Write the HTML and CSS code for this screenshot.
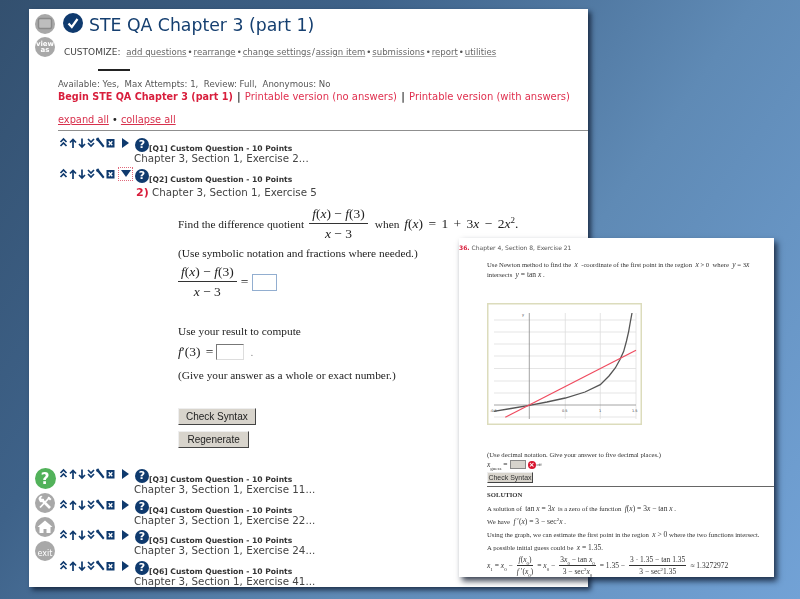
FILE: index.html
```html
<!DOCTYPE html>
<html lang="en">
<head>
<meta charset="utf-8">
<title>STE QA Chapter 3 (part 1)</title>
<link rel="stylesheet" href="styles.css">
</head>
<body>
<svg class="defs" width="0" height="0" aria-hidden="true">
  <symbol id="tools" viewBox="0 0 56 12">
    <g fill="none" stroke="#0f3a6e" stroke-width="1.7">
      <path d="M1.5 5 L4.5 2 L7.5 5 M1.5 9 L4.5 6 L7.5 9"/>
      <path d="M14 11 V2.5 M11 5.5 L14 2.5 L17 5.5"/>
      <path d="M23 1.5 V10 M20 7 L23 10 L26 7"/>
      <path d="M29 2 L32 5 L35 2 M29 6 L32 9 L35 6"/>
    </g>
    <path d="M37.5 1 L39.5 .5 L40.5 2.5 L45.5 9 L44 10.5 L39 4.5 L37 3 Z" fill="#0f3a6e"/>
    <rect x="47.5" y="2" width="8" height="8.5" fill="#0f3a6e"/>
    <path d="M49.7 4.2 L53.3 8.3 M53.3 4.2 L49.7 8.3" stroke="#fff" stroke-width="1.3"/>
  </symbol>
</svg>

<main class="window main-window">
  <nav class="rail">
    <div class="rail-group">
      <span class="round grey"><svg class="glyph" viewBox="0 0 20 20"><rect x="3.5" y="4.5" width="13" height="10" rx="1.5" fill="#bdbdbd" stroke="#8a8a8a" stroke-width="1.4"/></svg></span>
      <span class="round grey view-as">view<br>as</span>
    </div>
    <div class="rail-group rail-bottom">
      <span class="round green">?</span>
      <span class="round grey"><svg class="glyph" viewBox="0 0 20 20"><path d="M6.5 6.5 L15 15" stroke="#fff" stroke-width="2.6"/><path d="M14.5 4.5 L5 14.5" stroke="#fff" stroke-width="1.8"/><path d="M3.5 6 A3 3 0 0 1 7.5 3 L6 5 L7.5 6.8 L9 5.5 A3 3 0 0 1 5 9 Z" fill="#fff"/><path d="M13.5 3.5 L16.5 6 L15 7.5 L12.5 5 Z" fill="#fff"/></svg></span>
      <span class="round grey"><svg class="glyph" viewBox="0 0 20 20"><path d="M2.5 10 L10 3.5 L17.5 10 H15.5 V16 H11.5 V12 H8.5 V16 H4.5 V10 Z" fill="#fff"/></svg></span>
      <span class="round grey exit">exit</span>
    </div>
  </nav>

  <div class="content">
    <header class="title-row">
      <span class="check"><svg viewBox="0 0 20 20"><path d="M5.5 10.5 L8.8 14 L14.5 6" fill="none" stroke="#fff" stroke-width="2.2"/></svg></span>
      <h1 class="title">STE QA Chapter 3 (part 1)</h1>
    </header>
    <p class="customize">CUSTOMIZE: <span class="cust-links"><a>add questions</a><i>•</i><a>rearrange</a><i>•</i><a>change settings</a><i>/</i><a>assign item</a><i>•</i><a>submissions</a><i>•</i><a>report</a><i>•</i><a>utilities</a></span></p>
    <div class="tab-bar"></div>
    <p class="avail">Available: Yes,&nbsp; Max Attempts: 1,&nbsp; Review: Full,&nbsp; Anonymous: No</p>
    <p class="links"><b>Begin STE QA Chapter 3 (part 1)</b> <span class="sep">|</span> Printable version (no answers) <span class="sep">|</span> Printable version (with answers)</p>
    <p class="expand"><a>expand all</a> <span class="dot">•</span> <a>collapse all</a></p>
    <hr class="rule">

    <section class="q">
      <div class="q-head">
        <svg class="tools"><use href="#tools"/></svg>
        <span class="tri-cell"><span class="tri-right"></span></span>
        <span class="help">?</span>
        <span class="q-label">[Q1] Custom Question - 10 Points</span>
      </div>
      <p class="q-sub">Chapter 3, Section 1, Exercise 2...</p>
    </section>

    <section class="q q-open">
      <div class="q-head">
        <svg class="tools"><use href="#tools"/></svg>
        <span class="tri-cell tri-active"><span class="tri-down"></span></span>
        <span class="help">?</span>
        <span class="q-label">[Q2] Custom Question - 10 Points</span>
      </div>
      <p class="q-title"><b>2)</b> Chapter 3, Section 1, Exercise 5</p>
      <div class="problem">
        <div class="p-line p1"><span>Find the difference quotient</span>
          <span class="frac"><span class="num"><em>f</em>(<em>x</em>) − <em>f</em>(3)</span><span class="den"><em>x</em> − 3</span></span>
          <span class="when">when</span> <span class="math"><em>f</em>(<em>x</em>) = 1 + 3<em>x</em> − 2<em>x</em><sup>2</sup>.</span>
        </div>
        <div class="p-line p2">(Use symbolic notation and fractions where needed.)</div>
        <div class="p-line p3">
          <span class="frac"><span class="num"><em>f</em>(<em>x</em>) − <em>f</em>(3)</span><span class="den"><em>x</em> − 3</span></span>
          <span class="math">=</span> <span class="answer blue"></span>
        </div>
        <div class="p-line p4">Use your result to compute</div>
        <div class="p-line p5"><span class="math"><em>f</em>′(3) =</span> <span class="answer plain"></span> <span class="period">.</span></div>
        <div class="p-line p6">(Give your answer as a whole or exact number.)</div>
        <div class="btn btn-first">Check Syntax</div>
        <div class="btn btn-second">Regenerate</div>
      </div>
    </section>

    <section class="q">
      <div class="q-head">
        <svg class="tools"><use href="#tools"/></svg>
        <span class="tri-cell"><span class="tri-right"></span></span>
        <span class="help">?</span>
        <span class="q-label">[Q3] Custom Question - 10 Points</span>
      </div>
      <p class="q-sub">Chapter 3, Section 1, Exercise 11...</p>
    </section>
    <section class="q">
      <div class="q-head">
        <svg class="tools"><use href="#tools"/></svg>
        <span class="tri-cell"><span class="tri-right"></span></span>
        <span class="help">?</span>
        <span class="q-label">[Q4] Custom Question - 10 Points</span>
      </div>
      <p class="q-sub">Chapter 3, Section 1, Exercise 22...</p>
    </section>
    <section class="q">
      <div class="q-head">
        <svg class="tools"><use href="#tools"/></svg>
        <span class="tri-cell"><span class="tri-right"></span></span>
        <span class="help">?</span>
        <span class="q-label">[Q5] Custom Question - 10 Points</span>
      </div>
      <p class="q-sub">Chapter 3, Section 1, Exercise 24...</p>
    </section>
    <section class="q">
      <div class="q-head">
        <svg class="tools"><use href="#tools"/></svg>
        <span class="tri-cell"><span class="tri-right"></span></span>
        <span class="help">?</span>
        <span class="q-label">[Q6] Custom Question - 10 Points</span>
      </div>
      <p class="q-sub">Chapter 3, Section 1, Exercise 41...</p>
    </section>
  </div>
</main>

<aside class="window side-window">
  <p class="ex-title"><b>36.</b> Chapter 4, Section 8, Exercise 21</p>
  <div class="ex-body">
    <p class="ex-line ex-intro">Use Newton method to find the &nbsp;<em>x</em>&nbsp; -coordinate of the first point in the region &nbsp;<em>x</em> &gt; 0&nbsp; where &nbsp;<em>y</em> = 3<em>x</em></p>
    <p class="ex-line">intersects &nbsp;<span class="m"><em>y</em> = tan <em>x</em></span> .</p>
    <svg class="graph" viewBox="0 0 155 122" width="155" height="122">
      <rect x=".75" y=".75" width="153.5" height="120.5" fill="#fff" stroke="#dcdcbc" stroke-width="1.5"/>
      <g stroke="#dedede" stroke-width=".8">
        <path d="M7 17 H149 M7 29 H149 M7 41 H149 M7 53 H149 M7 65.5 H149 M7 78 H149 M7 90 H149 M7 114 H149"/>
        <path d="M78.3 10 V116 M113.3 10 V116 M149 10 V116"/>
      </g>
      <path d="M7 102 H149 M42.3 10 V116" stroke="#8d8d8d" stroke-width=".8"/>
      <path d="M6.7 108.3 L24 105.5 L42.3 102.3 L60 99 L78.3 95 L98 89 L113.3 81.7 L122 73 L128.3 65 L133 56.5 L136.7 48.3 L139.5 38 L141.7 28.3 L143.5 18 L145 10" fill="none" stroke="#555" stroke-width="1.3"/>
      <path d="M18.3 114.3 L149 47.3" stroke="#ef4b5f" stroke-width="1.2"/>
      <g class="graph-text">
        <text x="35" y="13">y</text><text x="3" y="109">-0.5</text><text x="75" y="109">0.5</text><text x="112" y="109">1</text><text x="145" y="109">1.5</text>
      </g>
    </svg>
    <p class="ex-line ex-decimal">(Use decimal notation. Give your answer to five decimal places.)</p>
    <div class="ex-line ex-guess"><span class="m"><em>x</em><sub>guess</sub> =</span><span class="mini-input"></span><span class="bad">×</span><span class="off">off</span></div>
    <div class="mini-btn">Check Syntax</div>
    <hr class="ex-rule">
    <p class="ex-line ex-sol"><b>SOLUTION</b></p>
    <p class="ex-line ex-s ex-first">A solution of &nbsp;<span class="m">tan <em>x</em> = 3<em>x</em></span> &nbsp;is a zero of the function &nbsp;<span class="m"><em>f</em>(<em>x</em>) = 3<em>x</em> − tan <em>x</em></span> .</p>
    <p class="ex-line ex-s">We have &nbsp;<span class="m"><em>f</em> ′(<em>x</em>) = 3 − sec<sup>2</sup><em>x</em></span> .</p>
    <p class="ex-line ex-s">Using the graph, we can estimate the first point in the region &nbsp;<span class="m"><em>x</em> &gt; 0</span> where the two functions intersect.</p>
    <p class="ex-line ex-s">A possible initial guess could be &nbsp;<span class="m"><em>x</em> = 1.35</span>.</p>
    <div class="ex-line ex-eq"><span class="m"><em>x</em><sub>1</sub> = <em>x</em><sub>0</sub> −</span>
      <span class="frac"><span class="num"><em>f</em>(<em>x</em><sub>0</sub>)</span><span class="den"><em>f</em> ′(<em>x</em><sub>0</sub>)</span></span>
      <span class="m">= <em>x</em><sub>0</sub> −</span>
      <span class="frac"><span class="num">3<em>x</em><sub>0</sub> − tan <em>x</em><sub>0</sub></span><span class="den">3 − sec<sup>2</sup><em>x</em><sub>0</sub></span></span>
      <span class="m">= 1.35 −</span>
      <span class="frac"><span class="num">3 · 1.35 − tan 1.35</span><span class="den">3 − sec<sup>2</sup>1.35</span></span>
      <span class="m">≈ 1.3272972</span>
    </div>
  </div>
</aside>
</body>
</html>
```

FILE: styles.css
```css
* { box-sizing: border-box; }
html, body { height: 100%; }
body {
  margin: 0;
  position: relative;
  overflow: hidden;
  font-family: "DejaVu Sans", sans-serif;
  background: linear-gradient(125deg, #33506f 0%, #3e6289 30%, #5f8ab5 62%, #72a2d6 100%);
}
p, h1 { margin: 0; }
.defs { position: absolute; }
em { font-style: italic; }
a { text-decoration: underline; }

.window {
  position: absolute;
  background: #fff;
  box-shadow: 3px 3px 5px rgba(10, 20, 40, .75);
}
.main-window {
  left: 29px; top: 9px;
  width: 559px; height: 578px;
  display: flex;
}
.side-window {
  left: 459px; top: 238px;
  width: 315px; height: 339px;
  box-shadow: 3px 4px 6px rgba(10, 20, 40, .8);
}

.rail {
  width: 29px;
  flex: none;
  display: flex;
  flex-direction: column;
  justify-content: space-between;
  padding: 5px 0 26px 6px;
  filter: blur(.3px);
}
.rail-group { display: flex; flex-direction: column; gap: 3px; }
.rail-bottom { gap: 4px; }
.round {
  width: 20px; height: 20px;
  border-radius: 50%;
  display: flex;
  align-items: center;
  justify-content: center;
  color: #fff;
  font-weight: bold;
  text-align: center;
}
.grey { background: #a8a8a8; }
.green { background: #52b25a; font-size: 15px; width: 21px; height: 21px; margin-left: -.5px; }
.glyph { width: 20px; height: 20px; }
.view-as { font-size: 7px; line-height: 6.5px; }
.exit { font-size: 8px; padding-top: 5px; font-weight: normal; }

.content { flex: 1; min-width: 0; filter: blur(.3px); }
.title-row { display: flex; align-items: center; gap: 6px; height: 20px; margin: 4px 0 0 5px; }
.check { width: 20px; height: 20px; border-radius: 50%; background: #0f3a6e; flex: none; display: block; }
.check svg { display: block; }
.title { font-size: 17.3px; font-weight: normal; color: #153f70; line-height: 20px; white-space: nowrap; margin-top: 4px; }
.customize { margin: 13px 0 0 6px; font-size: 9px; line-height: 12px; color: #444; white-space: nowrap; }
.cust-links { margin-left: 3px; color: #666; font-size: 8.55px; }
.cust-links a { text-decoration-color: #aaa; text-decoration-thickness: 1px; }
.cust-links i { font-style: normal; color: #555; margin: 0 1px; }
.tab-bar { width: 32px; height: 2px; margin: 11px 0 0 40px; background: #222; }
.avail { margin-top: 8px; font-size: 8.6px; line-height: 10px; color: #555; white-space: nowrap; }
.links { margin-top: 1px; font-size: 10px; line-height: 14px; color: #e0304f; white-space: nowrap; }
.links b { color: #d81e3c; font-size: 9.65px; }
.sep { color: #333; font-weight: bold; margin: 0 1px; }
.expand { margin-top: 9px; font-size: 9.8px; line-height: 14px; color: #d8304c; }
.dot { color: #222; }
.rule { margin: 3px 0 0; border: 0; height: 1px; background: #8f8f8f; }

.q { height: 30.5px; padding-top: 6px; margin-left: 1px; }
.q-open { height: auto; padding-top: 6px; }
.q-head { display: flex; align-items: flex-end; height: 15px; position: relative; }
.tools { width: 56px; height: 12px; flex: none; align-self: flex-start; }
.tri-cell { width: 13px; height: 12px; margin-left: 4px; flex: none; align-self: flex-start; display: flex; align-items: center; justify-content: center; }
.tri-active { outline: 1px dotted #e06a7c; }
.tri-right { border-left: 7px solid #0f3a6e; border-top: 5px solid transparent; border-bottom: 5px solid transparent; }
.tri-down { border-top: 7px solid #0f3a6e; border-left: 5px solid transparent; border-right: 5px solid transparent; }
.help {
  width: 14px; height: 14px;
  margin-left: 3px;
  border-radius: 50%;
  background: #0f3a6e;
  color: #fff;
  flex: none;
  font-size: 11px;
  font-weight: bold;
  line-height: 14px;
  text-align: center;
}
.q-label { font-size: 7.6px; font-weight: bold; color: #333; line-height: 8px; white-space: nowrap; margin-bottom: -1px; }
.q-sub { margin: 1px 0 0 75px; font-size: 10.3px; line-height: 11px; color: #444; white-space: nowrap; }
.q-title { margin: 2px 0 0 77px; font-size: 10.3px; line-height: 14px; color: #444; white-space: nowrap; }
.q-title b { color: #d81e3c; font-size: 11px; }

.problem { margin-left: 119px; font-family: "Liberation Serif", serif; font-size: 11.35px; color: #222; padding-bottom: 14.5px; }
.p-line { display: flex; align-items: center; gap: 3px; white-space: nowrap; height: 14px; }
.math { font-size: 13.5px; word-spacing: 2px; }
.p1 { margin-top: 8px; height: 33px; gap: 5px; }
.when { margin-left: 2px; }
.p1 sup, .p3 sup { font-size: 9px; line-height: 0; }
.p2 { margin-top: 5px; }
.p3 { margin-top: 5px; height: 34px; gap: 4px; }
.p4 { margin-top: 25px; }
.p5 { margin-top: 6px; height: 16px; }
.p6 { margin-top: 8px; }
.frac { display: inline-flex; flex-direction: column; align-items: center; vertical-align: middle; line-height: 1.3; white-space: nowrap; }
.num { border-bottom: 1px solid #333; padding: 0 1px 1px; align-self: stretch; text-align: center; }
.den { padding-top: 1px; }
.p1 .frac, .p3 .frac { font-size: 13.5px; }
.p1 .num, .p3 .num { padding: 0 3px; }
.answer { display: inline-block; height: 16px; background: #fff; }
.blue { width: 25px; height: 17px; border: 1px solid #92aed0; margin-top: 2px; }
.plain { width: 28px; border: 1px solid; border-color: #777 #ddd #ddd #777; }
.period { color: #888; margin-left: 3px; }
.btn {
  height: 17px;
  width: fit-content;
  padding: 0 7px;
  background: #d8d4cc;
  border: 1px solid;
  border-color: #eee #444 #444 #eee;
  font: 10px/15px "Liberation Sans", sans-serif;
  color: #222;
}
.btn-first { margin-top: 26px; }
.btn-second { margin-top: 6px; padding: 0 8.5px; }

.side-window > * { filter: blur(.45px); }
.ex-title { margin: 5px 0 0 0; font-size: 6px; line-height: 9px; color: #555; white-space: nowrap; }
.ex-title b { color: #d81e3c; }
.ex-body { margin-left: 28px; font-family: "Liberation Serif", serif; font-size: 6.7px; color: #333; }
.m, .ex-line em { font-size: 7.5px; }
.ex-line { line-height: 10px; height: 10px; white-space: nowrap; }
.ex-intro { margin-top: 8px; }
.graph { display: block; margin-top: 23px; }
.graph-text { font: 3.5px "DejaVu Sans", sans-serif; fill: #444; }
.ex-decimal { margin-top: 25px; }
.ex-guess { display: flex; align-items: center; gap: 2px; line-height: 9px; height: 9px; }
.ex-line sub { font-size: 5px; line-height: 0; }
.mini-input { width: 16px; height: 9px; background: #d6d3cc; border: 1px solid #888; display: inline-block; }
.bad { width: 8px; height: 8px; border-radius: 50%; background: #d8152f; color: #fff; font: bold 7px/8px "DejaVu Sans", sans-serif; text-align: center; }
.off { font-size: 4.5px; margin-left: -1px; align-self: flex-start; }
.mini-btn { margin-top: 3px; width: 46px; height: 11px; background: #d8d4cc; border: 1px solid; border-color: #eee #444 #444 #eee; font: 7px/9px "Liberation Sans", sans-serif; text-align: center; white-space: nowrap; color: #333; }
.ex-rule { margin: 3px 0 0; border: 0; height: 1px; background: #666; }
.ex-sol { margin-top: 3px; }
.ex-s { margin-top: 3px; }
.ex-first { margin-top: 4px; }
.ex-eq { display: flex; align-items: center; gap: 4px; height: 20px; margin-top: 2px; line-height: 9px; font-size: 7.5px; }
.ex-eq .frac { line-height: 1.2; }
.ex-eq .num { border-bottom-width: .8px; }
.ex-line sup { font-size: 5px; line-height: 0; }
```
